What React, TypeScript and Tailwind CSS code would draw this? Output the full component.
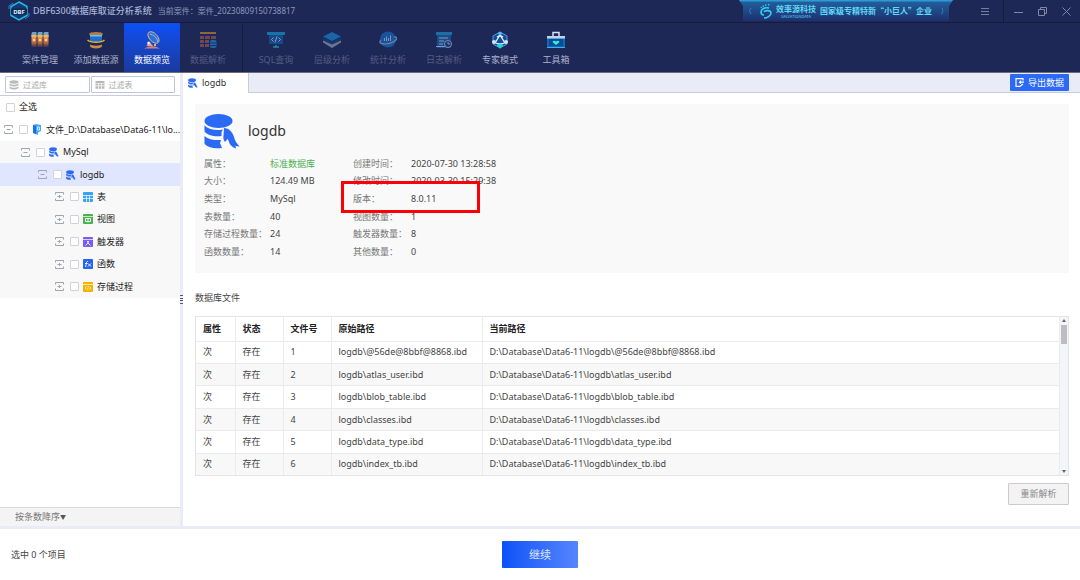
import type { ReactNode } from "react";

type IconName =
  | "cases"
  | "source"
  | "preview"
  | "parse"
  | "sql"
  | "layers"
  | "stats"
  | "log"
  | "expert"
  | "toolbox";

type Tool = { label: string; icon: IconName; state?: "active" | "disabled" };

const mainTools: Tool[] = [
  { label: "案件管理", icon: "cases" },
  { label: "添加数据源", icon: "source" },
  { label: "数据预览", icon: "preview", state: "active" },
  { label: "数据解析", icon: "parse", state: "disabled" },
];

const extraTools: Tool[] = [
  { label: "SQL查询", icon: "sql", state: "disabled" },
  { label: "层级分析", icon: "layers", state: "disabled" },
  { label: "统计分析", icon: "stats", state: "disabled" },
  { label: "日志解析", icon: "log", state: "disabled" },
  { label: "专家模式", icon: "expert" },
  { label: "工具箱", icon: "toolbox" },
];

const details: [string, string][] = [
  ["属性：", "标准数据库"],
  ["创建时间：", "2020-07-30 13:28:58"],
  ["大小：", "124.49 MB"],
  ["修改时间：", "2020-03-30 15:29:38"],
  ["类型：", "MySql"],
  ["版本：", "8.0.11"],
  ["表数量：", "40"],
  ["视图数量：", "1"],
  ["存储过程数量：", "24"],
  ["触发器数量：", "8"],
  ["函数数量：", "14"],
  ["其他数量：", "0"],
];

const files = [
  "@56de@8bbf@8868.ibd",
  "atlas_user.ibd",
  "blob_table.ibd",
  "classes.ibd",
  "data_type.ibd",
  "index_tb.ibd",
];

function ToolIcon({ name, dim }: { name: IconName; dim: boolean }) {
  const art: Record<IconName, ReactNode> = {
    cases: (
      <>
        <defs>
          <linearGradient id="amber" x2="0" y2="1">
            <stop stopColor="#f6a850" />
            <stop offset="0.5" stopColor="#e0813c" />
            <stop offset="1" stopColor="#3d3050" />
          </linearGradient>
        </defs>
        {[0.5, 6.5, 12.5].map((x) => (
          <g key={x}>
            <path d={`M${x} 4h5v12h-5z`} fill="url(#amber)" />
            <path d={`M${x} 2l1-1h4v3h-5z`} fill="#6fa6c4" />
            <path d={`M${x} 4h5v2h-5z`} fill="#f7b45a" />
            <circle cx={x + 2.5} cy="9" r="1" fill="#fff3d6" />
          </g>
        ))}
      </>
    ),
    source: (
      <>
        <ellipse cx="9" cy="3" rx="7" ry="2" fill="#b97a45" />
        <path d="M3 4h12v6q-6 2-12 0z" fill="#1d6fd0" />
        <path d="M3 4h12v1.5H3z" fill="#6cc3e8" />
        <path d="M.5 9c3 3 14 3 17 0" fill="none" stroke="#e8b530" strokeWidth="1.5" />
        <path d="M3 13.500c2 1.500 10 1.500 12 0v2c-2 2.500-10 2.500-12 0z" fill="#c98a4a" />
      </>
    ),
    preview: (
      <>
        <ellipse cx="10.500" cy="6.500" rx="4" ry="7" transform="rotate(-43 10.500 6.500)" fill="#2f6fd8" stroke="#e8b56b" strokeWidth="0.900" />
        <path d="M7 3q6 1 8 8" fill="none" stroke="#8cb8f2" />
        <path d="M3.500 15l2.500-5 4 5z" fill="#d9a39a" />
        <path d="M1 17.500q8-5 16 0z" fill="#d9806a" />
        <circle cx="5.500" cy="12" r="1.200" fill="#fff" />
        <circle cx="12" cy="14" r="1" fill="#f4d9d0" />
      </>
    ),
    parse: (
      <>
        <path d="M1 1h16v2H1z" fill="#d8932e" />
        <path d="M1 5h4v3H1zM6 5h5v3H6zM12 5h5v3h-5zM1 9h4v3H1zM6 9h4v3H6zM1 13h4v3H1zM6 13h4v3H6z" fill="#a65d50" />
        <rect x="11" y="9" width="6.500" height="8" rx="2" fill="#278fd0" />
        <path d="M11 12h6.500M11 14.500h6.500" stroke="#123e8a" />
      </>
    ),
    sql: (
      <>
        <path d="M0 1h18v3H0z" fill="#19a7d6" />
        <path d="M2 4h14v8q0 1-1 1H3q-1 0-1-1z" fill="#1460ad" />
        <path d="M6.500 6.500L4.500 8.500l2 2M11.500 6.500l2 2-2 2M10 5.500l-2 6" fill="none" stroke="#d6e4ff" />
        <path d="M6 16h6M9 14v2" stroke="#19d0d6" strokeWidth="1.500" />
      </>
    ),
    layers: (
      <>
        <path d="M0 8.500l9 4 9-4v3L9 17l-9-5.500z" fill="#9aa8c0" />
        <path d="M0 6.500l9 4 9-4v3l-9 4-9-4z" fill="#14407e" />
        <path d="M9 1l9 4.500L9 10 0 5.500z" fill="#198fdf" />
      </>
    ),
    stats: (
      <>
        <circle cx="9" cy="8.500" r="8" fill="#1a70c8" />
        <path d="M5.500 10V7M7.500 10V5.500M9.500 10V7M11.500 10V4.500" stroke="#b9ddff" />
        <path d="M2 9c-5 5 8 5 13 1.500 5-3.500 2-5 0-4.500" fill="none" stroke="#9cc0e8" strokeWidth="1.200" />
      </>
    ),
    log: (
      <>
        <path d="M2 1h14v16H2z" fill="#1766ae" />
        <path d="M1 1h16v3H1z" fill="#1e9bd7" />
        <path d="M4 7h9M4 10h5M4 13h4M1 15.500h9" stroke="#cfe2ff" />
        <circle cx="13" cy="13" r="3.500" fill="#1a3c78" stroke="#b6d3ff" />
        <path d="M13 11v2h2" fill="none" stroke="#fff" strokeWidth="0.8" />
      </>
    ),
    expert: (
      <>
        <path d="M9 1l7 4v8l-7 4-7-4V5z" fill="#144c9c" stroke="#5d9ad8" />
        <path d="M9 4L4 12M9 4l5 8M3 11q6 4 12 0M6 6q3-2 6 0" fill="none" stroke="#e6f3ff" strokeWidth="1.3" />
        <circle cx="9" cy="2.500" r="1.800" fill="#4fb8f5" />
        <circle cx="3" cy="11" r="2" fill="#cfe3fa" />
        <circle cx="15" cy="11" r="2" fill="#cfe3fa" />
        <path d="M5.500 14L9 12.500l3.500 1.500L9 17.500z" fill="#20ddd3" />
      </>
    ),
    toolbox: (
      <>
        <path d="M6 5V1.500h6V5" fill="none" stroke="#d5e2f2" strokeWidth="1.5" />
        <path d="M0 5h18v12H0z" fill="#1267b9" />
        <path d="M0 5h18v2.500H0z" fill="#b8d6ee" />
        <path d="M2 8h14v7H2z" fill="#0b4c97" />
        <path d="M9 14l-3.500-3q1-2 3.500-.5 2.500-1.500 3.500.5z" fill="#2ff0da" />
        <path d="M0 16.500h18" stroke="#38b4e8" />
      </>
    ),
  };
  return (
    <svg viewBox="0 0 18 18" className={`size-[18px] ${dim ? "opacity-60" : ""}`} aria-hidden="true">
      {art[name]}
    </svg>
  );
}

function ToolButton({ label, icon, state }: Tool) {
  const tone =
    state === "active"
      ? "bg-linear-to-b from-[#0b50f5] to-[#1a3a9c] text-white"
      : state === "disabled"
        ? "text-[#545c82]"
        : "text-[#a9b0cc]";
  return (
    <button
      disabled={state === "disabled"}
      className={`flex w-14 flex-col items-center gap-[3px] pt-2 whitespace-nowrap ${tone}`}
    >
      <ToolIcon name={icon} dim={state === "disabled"} />
      <span className="leading-4">{label}</span>
    </button>
  );
}

function DbIcon({ className }: { className: string }) {
  return (
    <svg viewBox="0 0 36 36" className={className} fill="#2b6af5" aria-hidden="true">
      <ellipse cx="14.500" cy="8" rx="14" ry="7" />
      <path d="M.5 12.500c4 4 12 5.500 18.500 4l-1.500 2.500v4C10 24 3 22 .5 18.500z" />
      <path d="M.5 23c4 3.500 10.500 4.500 16.500 4l-1 3 2 5C10 36 2.500 34 .5 30.500z" />
      <path d="M20 15c5 0 8.500 4 10 9 1 4 3 6.500 5.500 9.500l-4-.5.5 2.500c-3-1-5-2.500-6.500-5-.5-2-1-3.500-2-4.500l-2.500 3c-1.500-2-2-4-1.500-6z" />
    </svg>
  );
}

function Expander({ open }: { open: boolean }) {
  return (
    <svg viewBox="0 0 9 9" className="size-[9px] shrink-0" fill="none" stroke="#a0a3b2" aria-hidden="true">
      <path d="M.5 2.500V.5h8v2M.5 6.500v2h8v-2M2.500 4.500h4" />
      {!open && <path d="M4.500 3v3" />}
    </svg>
  );
}

function TypeIcon({ kind }: { kind: string }) {
  if (kind === "db") return <DbIcon className="size-[10px] shrink-0" />;
  if (kind === "file")
    return (
      <svg viewBox="0 0 10 11" className="h-[11px] w-[10px] shrink-0" aria-hidden="true">
        <path d="M1 1l3-1 5 1v6L6 8.500V11L1 9z" fill="#45a8f8" />
        <path d="M1 1l3 1v8L1 9z" fill="#1670ea" />
        <path d="M5.500 3h2v3h-2z" fill="none" stroke="#e3f2ff" strokeWidth="0.8" />
      </svg>
    );
  return (
    <svg viewBox="0 0 10 10" className="size-[10px] shrink-0" fill="none" stroke="#fff" aria-hidden="true">
      {kind === "table" && (
        <>
          <rect width="10" height="10" rx="1" fill="#38a3f5" stroke="none" />
          <path d="M0 3.500h10M0 6.500h10M3.500 3.500V10M6.500 3.500V10" strokeWidth="0.7" />
        </>
      )}
      {kind === "view" && (
        <>
          <rect width="10" height="10" rx="1" fill="#4caf50" stroke="none" />
          <path d="M0 2.500h10" strokeWidth="0.7" />
          <path d="M2.500 4.500h5v3h-5zM5 4v4.500" strokeWidth="0.9" />
        </>
      )}
      {kind === "trigger" && (
        <>
          <rect width="10" height="10" rx="1" fill="#7a5cf5" stroke="none" />
          <path d="M0 2.500h10" strokeWidth="0.7" />
          <path d="M5 4v2L2.500 8.500M5 6l2.500 2.500M4 4.500h2" strokeWidth="0.9" />
        </>
      )}
      {kind === "func" && (
        <>
          <rect width="10" height="10" rx="1" fill="#2563f0" stroke="none" />
          <path d="M5 2.500c-2-.5-1.500 2-2.500 5.500M2 4.500h2.500M5 4.500l3 3M8 4.500l-3 3" strokeWidth="0.9" />
        </>
      )}
      {kind === "proc" && (
        <>
          <rect width="10" height="10" rx="1" fill="#f5b301" stroke="none" />
          <path d="M0 2.500h10" strokeWidth="0.7" />
          <path d="M3.500 4.500L2 6l1.500 1.500M6.500 4.500L8 6 6.500 7.500M5.300 4.500l-.6 3" strokeWidth="0.7" />
        </>
      )}
    </svg>
  );
}

function Check() {
  return (
    <input
      type="checkbox"
      className="mr-1 ml-1.5 size-[9px] shrink-0 appearance-none rounded-[1px] border border-[#cfd1dc] bg-white checked:bg-[#2b6af5]"
    />
  );
}

function TreeRow({
  label,
  kind,
  indent,
  open = false,
  row = "",
}: {
  label: string;
  kind: string;
  indent: string;
  open?: boolean;
  row?: string;
}) {
  return (
    <li className={`flex items-center whitespace-nowrap ${indent} ${row}`}>
      <Expander open={open} />
      <label className="flex items-center">
        <Check />
        <TypeIcon kind={kind} />
        <span className="ml-1">{label}</span>
      </label>
    </li>
  );
}

function FilterBox({ placeholder, icon }: { placeholder: string; icon: ReactNode }) {
  return (
    <label className="flex h-[17px] min-w-0 flex-1 items-center gap-1 rounded-[1px] border border-[#bcc6dd] px-[3px]">
      {icon}
      <input
        aria-label={placeholder}
        placeholder={placeholder}
        className="w-full min-w-0 text-[8px] outline-none placeholder:text-[#a9a9a9]"
      />
    </label>
  );
}

function Banner() {
  return (
    <div className="relative flex h-[21px] w-[214px] items-center justify-center gap-1 font-['Noto_Sans_CJK_SC',sans-serif] text-[#62d8f7]">
      <svg
        viewBox="0 0 214 21"
        preserveAspectRatio="none"
        className="absolute inset-0 size-full"
        aria-hidden="true"
      >
        <defs>
          <linearGradient id="banner" x2="0" y2="1">
            <stop stopColor="#22639f" />
            <stop offset="1" stopColor="#1d3070" />
          </linearGradient>
        </defs>
        <path d="M0 0h214l-4 6v15H4V6z" fill="url(#banner)" />
        <path d="M0 0h214l-1 1.500H1z" fill="#2b9bd6" />
        <path d="M12 8q-3 3 0 6M202 14q3-1 1-6" fill="none" stroke="#2c7fc0" />
      </svg>
      <svg viewBox="0 0 12 16" className="relative h-4 w-3" fill="none" stroke="#35cdf2" aria-hidden="true">
        <path d="M9 5C5 4 1 6 1 9c0 2 1 3 3 3" strokeWidth="1.6" />
        <path d="M4 9c1-2 7-2 7 1s-4 5-7 5" strokeWidth="1.6" />
        <path d="M1 5l.5-1M3 4l.5-1.500M5.500 3L6 1.500M8.500 2.500L9 1" strokeWidth="1.3" />
      </svg>
      <div className="relative text-center">
        <div className="text-[8px] leading-[10px] font-bold">效率源科技</div>
        <div className="text-[4px] leading-[4px]">SALVATIONDATA</div>
      </div>
      <div className="relative text-[8px] font-bold whitespace-nowrap">国家级专精特新“小巨人”企业</div>
    </div>
  );
}

function Header() {
  return (
    <header className="bg-[#1e2856]">
      <div className="flex h-[23px] items-stretch border-b border-[#171c38]">
        <div className="flex flex-1 items-center pl-2">
          <svg viewBox="0 0 22 20" className="h-5 w-[22px]" fill="none" aria-hidden="true">
            <path d="M11 1l8 4.500v9L11 19l-8-4.500v-9z" fill="#123a70" stroke="#25b8e8" strokeWidth="1.5" />
            <path d="M1 8V5l4-3M21 12v3l-4 3" stroke="#2581cc" />
            <path d="M3 7.500h16v6H3z" fill="#14294f" />
            <text x="11" y="12.500" textAnchor="middle" fontSize="6" fontWeight="700" fill="#d5f0ff">
              DBF
            </text>
          </svg>
          <h1 className="ml-[3px] text-[9px] font-medium text-[#a9b4d6]">DBF6300数据库取证分析系统</h1>
          <span className="ml-1.5 text-[8px] text-[#8f98ba]">当前案件：案件_20230809150738817</span>
        </div>
        <Banner />
        <button aria-label="菜单" className="ml-3.5 flex w-9 items-center justify-center">
          <svg viewBox="0 0 8 8" className="size-2" stroke="#777f9f" aria-hidden="true">
            <path d="M0 1.500h8M0 4.500h8M0 7.500h8" />
          </svg>
        </button>
        <div className="flex border-l border-[#171c38] px-0.5 text-[#8088a6]">
          <button aria-label="最小化" className="flex w-6 items-center justify-center">
            <svg viewBox="0 0 9 9" className="size-[9px]" stroke="currentColor" aria-hidden="true">
              <path d="M0 5.500h9" />
            </svg>
          </button>
          <button aria-label="还原" className="flex w-6 items-center justify-center">
            <svg viewBox="0 0 9 9" className="size-[9px]" fill="none" stroke="currentColor" aria-hidden="true">
              <path d="M.5 2.500h6v6h-6zM2.500 2.500v-2h6v6h-2" />
            </svg>
          </button>
          <button aria-label="关闭" className="flex w-6 items-center justify-center">
            <svg viewBox="0 0 9 9" className="size-[9px]" stroke="currentColor" aria-hidden="true">
              <path d="M.5.5l8 8M8.500.5l-8 8" />
            </svg>
          </button>
        </div>
      </div>
      <nav className="flex h-[50px] border-b border-[#6a6c78]">
        <div className="flex border-r border-[#171c38] pr-1.5 pl-3">
          {mainTools.map((t) => (
            <ToolButton key={t.label} {...t} />
          ))}
        </div>
        <div className="flex pl-[5px]">
          {extraTools.map((t) => (
            <ToolButton key={t.label} {...t} />
          ))}
        </div>
      </nav>
    </header>
  );
}

function Sidebar() {
  return (
    <aside className="flex w-[180px] shrink-0 flex-col">
      <div className="flex gap-px border-b border-[#c9ccd8] pt-[3px] pr-[5px] pb-[2px] pl-[5px]">
        <FilterBox
          placeholder="过滤库"
          icon={
            <svg viewBox="0 0 10 10" className="size-[10px] shrink-0" fill="#b9b9b9" aria-hidden="true">
              <ellipse cx="5" cy="2" rx="4.500" ry="1.700" />
              <path d="M.5 3.500q4.500 2.500 9 0v1.700q-4.500 2.500-9 0zM.5 6.500q4.500 2.500 9 0v1.700q-4.500 2.500-9 0z" />
            </svg>
          }
        />
        <FilterBox
          placeholder="过滤表"
          icon={
            <svg viewBox="0 0 10 10" className="size-[10px] shrink-0" fill="#b9b9b9" aria-hidden="true">
              <path d="M.5 1h9v2h-9zM.5 3.500H3v2H.5zM3.700 3.500h2.600v2H3.700zM7 3.500h2.500v2H7zM.5 6.300H3v2.500H.5zM3.700 6.300h2.600v2.500H3.700zM7 6.300h2.500v2.500H7z" />
            </svg>
          }
        />
      </div>
      <ul className="grid min-h-[202px] auto-rows-fr text-[#222]">
        <li className="flex items-center">
          <label className="flex items-center">
            <Check />
            全选
          </label>
        </li>
        <TreeRow label="文件_D:\Database\Data6-11\lo..." kind="file" indent="pl-1" open />
        <TreeRow label="MySql" kind="db" indent="pl-[21px]" row="bg-[#f8f8f8]" open />
        <TreeRow label="logdb" kind="db" indent="pl-[38px]" row="bg-[#dfe6fd]" open />
        <TreeRow label="表" kind="table" indent="pl-[55px]" row="bg-[#f8f8f8]" />
        <TreeRow label="视图" kind="view" indent="pl-[55px]" row="bg-[#f8f8f8]" />
        <TreeRow label="触发器" kind="trigger" indent="pl-[55px]" row="bg-[#f8f8f8]" />
        <TreeRow label="函数" kind="func" indent="pl-[55px]" row="bg-[#f8f8f8]" />
        <TreeRow label="存储过程" kind="proc" indent="pl-[55px]" row="bg-[#f8f8f8]" />
      </ul>
      <button className="mt-auto flex h-[19px] items-center border-t border-[#dcdcdc] bg-[#f4f4f4] pl-[15px] text-[#777]">
        按条数降序<span className="text-[6px] text-[#555]">▼</span>
      </button>
    </aside>
  );
}

function Overview() {
  return (
    <section className="bg-[#f9f9f9] px-[9px] pt-[9px] pb-3">
      <div className="flex items-center gap-2">
        <DbIcon className="size-9" />
        <h2 className="text-[14px] text-[#333]">logdb</h2>
      </div>
      <dl className="relative mt-[6px] grid min-h-[106px] w-fit auto-rows-fr grid-cols-[66px_83px_58px_auto] items-center text-[#444]">
        {details.map(([name, value]) => (
          <div key={name} className="contents">
            <dt className="whitespace-nowrap text-[#777]">{name}</dt>
            <dd className={value === "标准数据库" ? "text-[#4caf50]" : ""}>{value}</dd>
          </div>
        ))}
        <div className="absolute top-[26px] left-[137px] h-8 w-[139px] border-3 border-[#fb0007]" />
      </dl>
    </section>
  );
}

function FileTable() {
  const cell = "border-r border-[#ebebeb] px-[7px]";
  return (
    <div className="flex border border-[#e4e4e6]">
      <table className="h-[158px] flex-1 table-fixed border-collapse text-left text-[#444]">
        <thead>
          <tr className="h-6 text-[#222]">
            <th className={`w-[39px] ${cell}`}>属性</th>
            <th className={`w-12 ${cell}`}>状态</th>
            <th className={`w-12 ${cell}`}>文件号</th>
            <th className={`w-[151px] ${cell}`}>原始路径</th>
            <th className={cell}>当前路径</th>
          </tr>
        </thead>
        <tbody>
          {files.map((file, i) => (
            <tr key={file} className="border-t border-[#ebebeb] even:bg-[#f8f8f8]">
              <td className={cell}>次</td>
              <td className={cell}>存在</td>
              <td className={cell}>{i + 1}</td>
              <td className={cell}>logdb\{file}</td>
              <td className={cell}>D:\Database\Data6-11\logdb\{file}</td>
            </tr>
          ))}
        </tbody>
      </table>
      <div className="flex w-2 flex-col items-center gap-[3px] bg-[#f3f5fa] py-0.5" aria-hidden="true">
        <svg viewBox="0 0 4 3" className="h-[3px] w-1" fill="#666">
          <path d="M2 0l2 3H0z" />
        </svg>
        <div className="h-[19px] w-[6px] bg-[#bdbdbd]" />
        <svg viewBox="0 0 4 3" className="mt-auto h-[3px] w-1" fill="#666">
          <path d="M2 3l2-3H0z" />
        </svg>
      </div>
    </div>
  );
}

export default function App() {
  return (
    <div className="flex min-h-screen flex-col bg-white font-['Noto_Sans','Noto_Sans_CJK_SC',sans-serif] text-[9px] leading-4">
      <Header />

      <div className="flex flex-1">
        <Sidebar />

        <div className="flex w-[3px] shrink-0 items-center bg-[#e9ecf6]">
          <svg viewBox="0 0 3 9" className="h-[9px] w-[3px]" stroke="#555a6b" aria-hidden="true">
            <path d="M0 .5h3M0 3.500h3M0 5.500h3M0 8.500h3" />
          </svg>
        </div>

        <main className="flex min-w-0 flex-1 flex-col">
          <div className="flex h-5 items-stretch bg-[#e9ecf6]">
            <button className="flex w-[66px] items-center gap-1 border-r border-[#c9ccd8] bg-white pl-[5px] text-[#333]">
              <DbIcon className="size-[10px]" />
              logdb
            </button>
            <div className="flex flex-1 items-center justify-end border-b border-[#c9ccd8] pr-[11px]">
              <button className="flex h-[17px] items-center gap-1 rounded-[1px] bg-[#2b69f6] px-[5px] text-white">
                <svg viewBox="0 0 9 9" className="size-[9px]" fill="none" stroke="#fff" strokeWidth="1.2" aria-hidden="true">
                  <path d="M8 2.500V.6H1v7.800h4L8 6M9 4.200H4.500M6 2.700L4.500 4.200 6 5.700" />
                </svg>
                导出数据
              </button>
            </div>
          </div>

          <div className="flex flex-col pt-[11px] pr-[11px] pl-3">
            <Overview />
            <h3 className="mt-[17px] mb-[10px] text-[#444]">数据库文件</h3>
            <FileTable />
            <button className="mt-[7px] h-[22px] w-[61px] self-end rounded-[1px] border border-[#cbcbcb] bg-[#f3f3f3] text-[#888]">
              重新解析
            </button>
          </div>
        </main>
      </div>

      <footer className="grid h-[54px] grid-cols-3 items-center border-t-3 border-[#e9ecf6] px-[11px]">
        <span className="text-[#444]">选中 0 个项目</span>
        <button className="h-[27px] w-[76px] justify-self-center rounded-[1px] bg-linear-to-r from-[#0b50f8] to-[#5585fd] text-[11px] text-[#dbe6ff]">
          继续
        </button>
      </footer>
    </div>
  );
}
